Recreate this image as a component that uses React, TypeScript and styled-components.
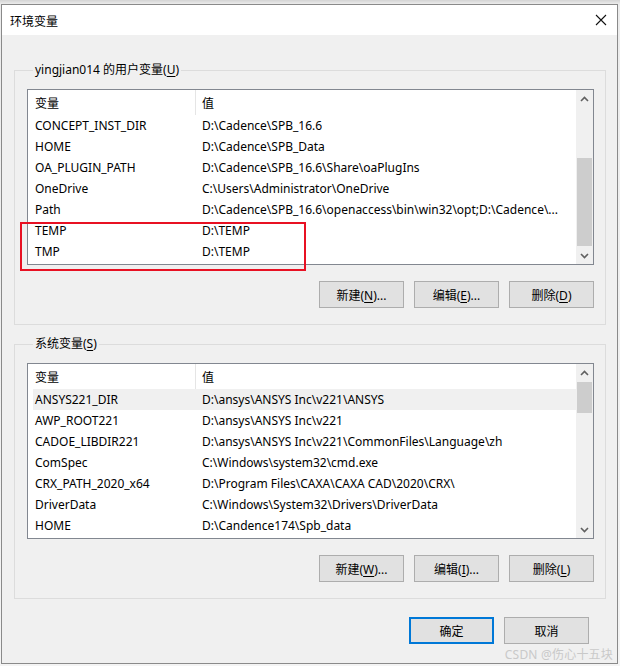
import React from 'react';
import styled, {createGlobalStyle} from "styled-components";

const GlobalStyle = createGlobalStyle`
  html, body {
    margin: 0;
    padding: 0;
    background: #ffffff;
  }
  body {
    font-family: "Noto Sans", "Noto Sans CJK SC", sans-serif;
    font-size: 12px;
    color: #000;
  }
`

type Row = { name: string; value: string };

const userVars: Row[] = [
    {name: 'CONCEPT_INST_DIR', value: 'D:\\Cadence\\SPB_16.6'},
    {name: 'HOME', value: 'D:\\Cadence\\SPB_Data'},
    {name: 'OA_PLUGIN_PATH', value: 'D:\\Cadence\\SPB_16.6\\Share\\oaPlugIns'},
    {name: 'OneDrive', value: 'C:\\Users\\Administrator\\OneDrive'},
    {name: 'Path', value: 'D:\\Cadence\\SPB_16.6\\openaccess\\bin\\win32\\opt;D:\\Cadence\\...'},
    {name: 'TEMP', value: 'D:\\TEMP'},
    {name: 'TMP', value: 'D:\\TEMP'},
];

const sysVars: Row[] = [
    {name: 'ANSYS221_DIR', value: 'D:\\ansys\\ANSYS Inc\\v221\\ANSYS'},
    {name: 'AWP_ROOT221', value: 'D:\\ansys\\ANSYS Inc\\v221'},
    {name: 'CADOE_LIBDIR221', value: 'D:\\ansys\\ANSYS Inc\\v221\\CommonFiles\\Language\\zh'},
    {name: 'ComSpec', value: 'C:\\Windows\\system32\\cmd.exe'},
    {name: 'CRX_PATH_2020_x64', value: 'D:\\Program Files\\CAXA\\CAXA CAD\\2020\\CRX\\'},
    {name: 'DriverData', value: 'C:\\Windows\\System32\\Drivers\\DriverData'},
    {name: 'HOME', value: 'D:\\Candence174\\Spb_data'},
];

const Chevron = ({up}: { up?: boolean }) => (
    <svg width="9" height="6" viewBox="0 0 9 6">
        <polyline points={up ? '1,5 4.5,1.5 8,5' : '1,1 4.5,4.5 8,1'} fill="none" stroke="#606060"
                  strokeWidth="1.6"/>
    </svg>
);

const VarList = ({rows, thumbTop, thumbHeight, selected, children}: {
    rows: Row[]; thumbTop: number; thumbHeight: number; selected?: number; children?: React.ReactNode
}) => (
    <ListBox>
        <ListBody>
            <HeaderRow>
                <NameCell header>变量</NameCell>
                <ValueCell>值</ValueCell>
            </HeaderRow>
            {rows.map((r, i) => (
                <DataRow key={r.name + i} selected={i === selected}>
                    <NameCell>{r.name}</NameCell>
                    <ValueCell>{r.value}</ValueCell>
                </DataRow>
            ))}
        </ListBody>
        <ScrollBar>
            <ArrowButton><Chevron up/></ArrowButton>
            <Track>
                <Thumb top={thumbTop} size={thumbHeight}/>
            </Track>
            <ArrowButton><Chevron/></ArrowButton>
        </ScrollBar>
        {children}
    </ListBox>
);

const ButtonRow = ({keys}: { keys: [string, string, string] }) => (
    <Buttons>
        <Button>新建(<u>{keys[0]}</u>)...</Button>
        <Button>编辑(<u>{keys[1]}</u>)...</Button>
        <Button>删除(<u>{keys[2]}</u>)</Button>
    </Buttons>
);

export default function App() {
    return (
        <>
            <GlobalStyle/>
            <Shadow>
                <Window>
                    <TitleBar>
                        <Title>环境变量</Title>
                        <CloseIcon>
                            <svg width="12" height="12" viewBox="0 0 12 12">
                                <path d="M1 1 L11 11 M11 1 L1 11" stroke="#111" strokeWidth="1.1"/>
                            </svg>
                        </CloseIcon>
                    </TitleBar>
                    <Body>
                        <Group>
                            <Legend>yingjian014 的用户变量(<u>U</u>)</Legend>
                            <VarList rows={userVars} thumbTop={51} thumbHeight={88}>
                                <Highlight/>
                            </VarList>
                            <ButtonRow keys={['N', 'E', 'D']}/>
                        </Group>
                        <Group second>
                            <Legend>系统变量(<u>S</u>)</Legend>
                            <VarList rows={sysVars} thumbTop={1} thumbHeight={31} selected={0}/>
                            <ButtonRow keys={['W', 'I', 'L']}/>
                        </Group>
                        <Footer>
                            <Button primary>确定</Button>
                            <Button>取消</Button>
                        </Footer>
                    </Body>
                    <Watermark>CSDN @伤心十五块</Watermark>
                </Window>
            </Shadow>
        </>
    );
}

const Shadow = styled.div`
  width: 620px;
  height: 666px;
  padding: 4px 2px 2px 1px;
  box-sizing: border-box;
  background: linear-gradient(#d4d4d4, #ececec 4px, #f4f4f4);
`
const Window = styled.div`
  position: relative;
  width: 617px;
  height: 660px;
  box-sizing: border-box;
  border: 1px solid #8a8a8a;
  background: #f0f0f0;
  display: flex;
  flex-direction: column;
`
const TitleBar = styled.div`
  height: 30px;
  background: #ffffff;
  display: flex;
  align-items: center;
  justify-content: space-between;
  padding: 0 8px 0 8px;
  flex-shrink: 0;
`
const Title = styled.span`
  font-size: 12px;
  font-family: "Noto Sans CJK SC", sans-serif;
  color: #000;
`
const CloseIcon = styled.span`
  display: flex;
  width: 16px;
  justify-content: center;
`
const Body = styled.div`
  padding: 27px 11px 0 12px;
  display: flex;
  flex-direction: column;
`
const Group = styled.fieldset<{ second?: boolean }>`
  margin: ${p => p.second ? '11px' : '0'} 0 0 0;
  padding: 11px 11px 16px 12px;
  border: 1px solid #dcdcdc;
  min-width: 0;
`
const Legend = styled.legend`
  padding: 0 2px;
  margin-left: 6px;
  line-height: 16px;
  font-size: 12px;
  font-family: "Noto Sans", "Noto Sans CJK SC", sans-serif;
  color: #000;

  u {
    text-underline-offset: 2px;
  }
`
const ListBox = styled.div`
  position: relative;
  height: 176px;
  border: 1px solid #828790;
  background: #fff;
  display: flex;
  box-sizing: border-box;
`
const ListBody = styled.div`
  flex: 1;
  overflow: hidden;
  padding-left: 5px;
`
const HeaderRow = styled.div`
  display: flex;
  height: 25px;
  align-items: center;
`
const DataRow = styled.div<{ selected?: boolean }>`
  display: flex;
  height: 21px;
  align-items: center;
  background: ${p => p.selected ? '#f0f0f0' : 'transparent'};
`
const NameCell = styled.div<{ header?: boolean }>`
  width: 163px;
  box-sizing: border-box;
  padding-left: 2px;
  height: 100%;
  display: flex;
  align-items: center;
  white-space: nowrap;
  border-right: ${p => p.header ? '1px solid #e5e5e5' : '1px solid transparent'};
`
const ValueCell = styled.div`
  flex: 1;
  padding-left: 6px;
  white-space: nowrap;
  overflow: hidden;
`
const Highlight = styled.div`
  position: absolute;
  left: -8px;
  top: 132px;
  width: 286px;
  height: 49px;
  border: 2px solid #e81123;
  box-sizing: border-box;
  pointer-events: none;
`
const ScrollBar = styled.div`
  width: 17px;
  display: flex;
  flex-direction: column;
  background: #f0f0f0;
`
const ArrowButton = styled.div`
  height: 17px;
  display: flex;
  align-items: center;
  justify-content: center;
`
const Track = styled.div`
  flex: 1;
`
const Thumb = styled.div<{ top: number; size: number }>`
  margin: ${p => p.top}px 1px 0 1px;
  height: ${p => p.size}px;
  background: #cdcdcd;
`
const Buttons = styled.div`
  display: flex;
  justify-content: flex-end;
  gap: 10px;
  margin-top: 16px;
`
const Button = styled.button<{ primary?: boolean }>`
  width: 85px;
  height: 27px;
  box-sizing: border-box;
  background: #e1e1e1;
  border: ${p => p.primary ? '2px solid #0078d7' : '1px solid #adadad'};
  font-family: "Noto Sans", "Noto Sans CJK SC", sans-serif;
  font-size: 12px;
  color: #000;
  padding: 0;

  u {
    text-underline-offset: 2px;
  }
`
const Footer = styled.div`
  display: flex;
  justify-content: flex-end;
  gap: 10px;
  margin-top: 18px;
  padding-right: 17px;
`
const Watermark = styled.div`
  position: absolute;
  right: 4px;
  bottom: 0;
  font-size: 12px;
  font-family: "Noto Sans", "Noto Sans CJK SC", sans-serif;
  color: #c9c9c9;
  letter-spacing: 0.2px;
`
